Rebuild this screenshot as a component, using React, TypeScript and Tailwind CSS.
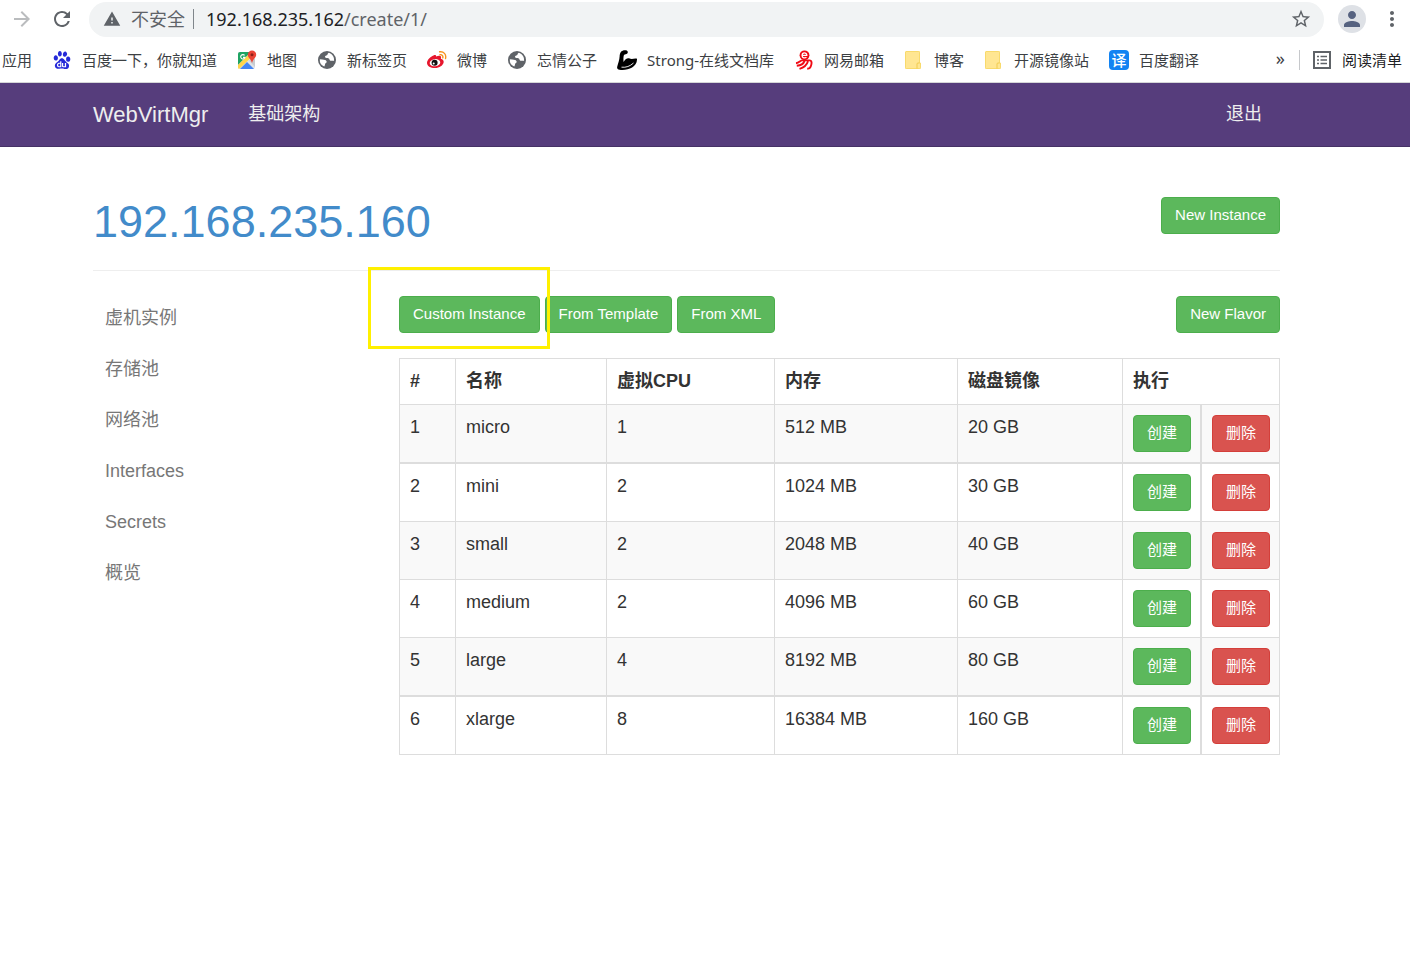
import React from "react";
import type { ReactNode } from "react";
import { SiBaidu } from "react-icons/si";
import {
  MdRefresh,
  MdArrowForward,
  MdStarBorder,
  MdWarning,
  MdPerson,
  MdMoreVert,
} from "react-icons/md";

function MapIcon() {
  return (
    <svg viewBox="0 0 20 20" className="size-5">
      <rect x="1" y="2" width="17" height="17" rx="2" fill="#dfe3e6" />
      <path d="M3 2h11L1 15V4a2 2 0 0 1 2-2z" fill="#1fa463" />
      <path d="M1 15 14 2l3 3L2 19a2 2 0 0 1-1-2z" fill="#ffd54a" />
      <path d="M3 19 10 12l7 7z" fill="#4285f4" />
      <path d="M12 10.500 18 17V9z" fill="#c9cdd1" />
      <path d="M7.600 5.400A2.200 2.200 0 1 0 8 7.400H6" fill="none" stroke="#fff" strokeWidth="1.100" />
      <path d="M15 0.500a4.200 4.200 0 0 0-4.200 4.200c0 3 3.400 4.300 4.200 8.300.8-4 4.200-5.300 4.200-8.300A4.200 4.200 0 0 0 15 .5z" fill="#ea4335" />
      <circle cx="15" cy="4.700" r="1.500" fill="#8e1f17" />
    </svg>
  );
}

function GlobeIcon() {
  return (
    <svg viewBox="0 0 20 20" className="size-5">
      <circle cx="10" cy="10" r="9" fill="#5f6368" />
      <path
        d="M12 2.800c-1 .3-1.300.9-1.500 1.700-.2.900-1 1-1.800 1.200-1 .3-.8 1.600-.1 2.100 1 .7 2.700.1 3.500 1 .6.700.3 1.700 1.300 1.900 1.300.3 2.600-.3 3.700.2A7.300 7.300 0 0 0 12 2.800z"
        fill="#fff"
      />
      <path
        d="M2.800 9.300c1.700.2 3.600.2 5.200.7 1.200.4 2 1.200 1.600 2.300-.3.800-1.300.9-1.500 1.800-.2.900-.2 1.900-.9 2.500A7.300 7.300 0 0 1 2.800 9.300z"
        fill="#fff"
      />
    </svg>
  );
}

function WeiboIcon() {
  return (
    <svg viewBox="0 0 20 20" className="size-5">
      <path
        d="M6.500 5.500c1.400-.7 2.600-.5 2.700.9 2-.8 4.600-1.200 4.900.6.1.7-.2 1.200-.3 1.700 2 .5 3 1.600 2.900 3.300-.3 3.400-4.400 6-8.700 6C3.500 18 0 15.900 0 12.900c0-2.900 3.600-6.200 6.500-7.400z"
        fill="#e6162d"
      />
      <ellipse cx="8" cy="12.700" rx="5.300" ry="3.600" transform="rotate(-8 8 12.700)" fill="#fff" />
      <circle cx="7.600" cy="12.800" r="3" fill="#111" />
      <circle cx="6.700" cy="13.500" r="1" fill="#fff" />
      <path d="M12.600 1.800c4-.7 7 2.600 5.900 6.700M13 4.700c2-.3 3.300 1.200 2.800 3.100" fill="none" stroke="#f7931e" strokeWidth="1.400" strokeLinecap="round" />
    </svg>
  );
}

function ArmIcon() {
  return (
    <svg viewBox="0 0 20 20" className="size-5">
      <path
        d="M4.500 1.300C5.800.2 8.300-.2 9.800.6c1.200.8 1.300 2 .5 2.800-.9.800-2.500.6-3.300 1.500-.6 1.400-.7 4.600-.4 7.100 1.300-2.700 3.100-4.100 5.400-3.800 1 .2 1.900.7 2.800.7 1.600 0 3-.6 5.200-.2.200 3.900-1.800 6.900-4.900 8.800-3.400 2.100-8.600 2.800-12.600 2.200C.5 19.500-.2 18.300.2 16.800 1 13.500 2.500 10 2.600 6.500c0-2 .7-4.100 1.900-5.200z"
        fill="#000"
      />
      <path d="M4.500 17.200c4.500.5 8.500-.9 12-4.200" fill="none" stroke="#fff" strokeWidth="0.900" />
    </svg>
  );
}

function NeteaseIcon() {
  return (
    <svg viewBox="0 0 20 20" className="size-5">
      <circle cx="10.500" cy="5.300" r="4.900" fill="#f00a14" />
      <path d="M8.200 5.400h4.600c0-3.400-4.700-3.300-4.700 0 0 2.800 3 3 4.300 1.700" fill="none" stroke="#fff" strokeWidth="1.300" />
      <path
        d="M2 13.300c3.200-.4 4-2.600 6-2.900h7.500c2.600 0 2.300 3.200 1.400 5.600-.8 2.300-2 2.900-3.700 2.500M10.500 11.200c-1 2.700-4 4.300-7.700 4.600M14 11.200c-1.200 4-4.500 6.500-8.500 7.600"
        fill="none"
        stroke="#f00a14"
        strokeWidth="1.900"
      />
    </svg>
  );
}

function FolderIcon() {
  return (
    <svg viewBox="0 0 20 20" className="size-5">
      <path d="M2 1h13a1 1 0 0 1 1 1v11h1v5a1 1 0 0 1-1 1H2a1 1 0 0 1-1-1V2a1 1 0 0 1 1-1z" fill="#ffe692" />
      <path d="M2 1.500h12.500a1 1 0 0 1 1 1V13h1v4.500a1 1 0 0 1-1 1H2.500a1 1 0 0 1-1-1V2" fill="none" stroke="#f8da6c" />
      <path d="M13 18.500V14a1 1 0 0 1 1-1h1.500" fill="none" stroke="#f0cb4e" />
    </svg>
  );
}

function TranslateIcon() {
  return (
    <span className="flex size-5 items-center justify-center rounded-sm bg-[#1283f2] text-[15px] leading-5 font-medium text-white">
      译
    </span>
  );
}

function ReadingListIcon() {
  return (
    <svg viewBox="0 0 20 20" className="size-5" fill="none" stroke="#5f6368">
      <rect x="2" y="2" width="16" height="16" strokeWidth="2" />
      <path d="M5 6.500h2M5 10h2M5 13.500h2M8.500 6.500H15M8.500 10H15M8.500 13.500H15" strokeWidth="1.500" />
    </svg>
  );
}

const bookmarks: { label: string; icon?: ReactNode }[] = [
  { label: "应用" },
  { label: "百度一下，你就知道", icon: <SiBaidu className="size-[18px] text-[#2529d8]" /> },
  { label: "地图", icon: <MapIcon /> },
  { label: "新标签页", icon: <GlobeIcon /> },
  { label: "微博", icon: <WeiboIcon /> },
  { label: "忘情公子", icon: <GlobeIcon /> },
  { label: "Strong-在线文档库", icon: <ArmIcon /> },
  { label: "网易邮箱", icon: <NeteaseIcon /> },
  { label: "博客", icon: <FolderIcon /> },
  { label: "开源镜像站", icon: <FolderIcon /> },
  { label: "百度翻译", icon: <TranslateIcon /> },
];

function BrowserChrome() {
  return (
    <div className="border-b border-[#d5d6d8] bg-white font-['Noto_Sans','Noto_Sans_CJK_SC',sans-serif]">
      <div className="flex h-10 items-center pr-1.5 pb-0.5 pl-2.5">
        <button type="button" aria-label="前进" className="mr-4 text-[#babcbe]">
          <MdArrowForward className="size-6" />
        </button>
        <button type="button" aria-label="重新加载" className="mr-[15px] text-[#5f6368]">
          <MdRefresh className="size-6" />
        </button>
        <div className="flex h-[35px] min-w-0 flex-1 items-center rounded-full bg-[#f1f3f4] pr-3 pl-3.5 text-lg leading-6">
          <MdWarning className="mr-2.5 size-[18px] text-[#5f6368]" />
          <span className="text-[#5f6368]">不安全</span>
          <span className="mr-3 ml-2 h-5 w-px bg-[#80868b]" />
          <div
            role="textbox"
            aria-label="地址"
            contentEditable
            suppressContentEditableWarning
            className="min-w-0 flex-1 truncate text-[#5f6368] outline-none"
          >
            <span className="text-[#202124]">192.168.235.162</span>/create/1/
          </div>
          <button type="button" aria-label="为此标签页添加书签" className="text-[#5f6368]">
            <MdStarBorder className="size-[22px]" />
          </button>
        </div>
        <button
          type="button"
          aria-label="用户"
          className="mr-3.5 ml-3.5 flex size-7 items-center justify-center rounded-full bg-[#dee1e6] text-[#566280]"
        >
          <MdPerson className="size-6" />
        </button>
        <button type="button" aria-label="菜单" className="text-[#5f6368]">
          <MdMoreVert className="size-6" />
        </button>
      </div>
      <div className="flex h-[42px] items-center pr-2 pb-0.5 pl-0.5 text-[15px] leading-5 text-[#3c4043]">
        <nav aria-label="书签" className="flex min-w-0 flex-1 gap-5 overflow-hidden whitespace-nowrap">
          {bookmarks.map(({ label, icon }) => (
            <a key={label} href="#" className="flex shrink-0 items-center gap-2.5">
              {icon && <span className="flex size-5 items-center justify-center">{icon}</span>}
              {label}
            </a>
          ))}
        </nav>
        <button type="button" aria-label="更多书签" className="mr-3.5 pb-1 text-lg leading-5 text-[#3c4043]">
          »
        </button>
        <span className="mr-3 h-5 w-px bg-[#c6c8cb]" />
        <button type="button" className="flex items-center gap-2.5 text-[#202124]">
          <ReadingListIcon />
          阅读清单
        </button>
      </div>
    </div>
  );
}

function Button({ children, danger = false }: { children: ReactNode; danger?: boolean }) {
  const tone = danger ? "border-[#d43f3a] bg-[#d9534f]" : "border-[#4cae4c] bg-[#5cb85c]";
  return (
    <button
      type="button"
      className={`block rounded-sm border px-[13px] pt-[7px] pb-2 text-[15px] leading-5 whitespace-nowrap text-white ${tone}`}
    >
      {children}
    </button>
  );
}

const links = ["虚机实例", "存储池", "网络池", "Interfaces", "Secrets", "概览"];

const flavors = [
  { id: 1, name: "micro", cpu: 1, memory: "512 MB", disk: "20 GB" },
  { id: 2, name: "mini", cpu: 2, memory: "1024 MB", disk: "30 GB" },
  { id: 3, name: "small", cpu: 2, memory: "2048 MB", disk: "40 GB" },
  { id: 4, name: "medium", cpu: 2, memory: "4096 MB", disk: "60 GB" },
  { id: 5, name: "large", cpu: 4, memory: "8192 MB", disk: "80 GB" },
  { id: 6, name: "xlarge", cpu: 8, memory: "16384 MB", disk: "160 GB" },
];

const headings = ["#", "名称", "虚拟CPU", "内存", "磁盘镜像"];
const headCell = "border-t border-l border-[#ddd] p-2.5 text-left font-bold";

function FlavorTable() {
  return (
    <table className="w-full table-fixed border-separate border-spacing-0 border-r border-b border-[#ddd]">
      <colgroup>
        <col className="w-[56px]" />
        <col className="w-[151px]" />
        <col className="w-[168px]" />
        <col className="w-[183px]" />
        <col className="w-[165px]" />
        <col className="w-[78px]" />
        <col className="w-[79px]" />
      </colgroup>
      <thead>
        <tr>
          {headings.map((h) => (
            <th key={h} className={headCell}>
              {h}
            </th>
          ))}
          <th colSpan={2} className={headCell}>
            执行
          </th>
        </tr>
      </thead>
      <tbody>
        {flavors.map((f) => {
          const top = f.id === 2 || f.id === 6 ? "border-t-2" : "border-t";
          const cell = `${top} border-l border-[#ddd] p-2.5 align-top`;
          return (
            <tr key={f.id} className="odd:bg-[#f9f9f9]">
              <td className={cell}>{f.id}</td>
              <td className={cell}>{f.name}</td>
              <td className={cell}>{f.cpu}</td>
              <td className={cell}>{f.memory}</td>
              <td className={cell}>{f.disk}</td>
              <td className={cell}>
                <Button>创建</Button>
              </td>
              <td className={`${top} border-l-2 border-[#ddd] py-2.5 pl-2.5 align-top`}>
                <Button danger>删除</Button>
              </td>
            </tr>
          );
        })}
      </tbody>
    </table>
  );
}

export default function App() {
  return (
    <div className="min-h-screen bg-white font-['Liberation_Sans','Noto_Sans_CJK_SC',sans-serif] text-lg leading-[25px] text-[#333]">
      <BrowserChrome />
      <header className="border-b border-[#463265] bg-[#563d7c] pr-[148px] pl-[93px] text-[#eee]">
        <nav className="flex h-[63px] items-center">
          <a href="#" className="mr-10 text-[22px]">
            WebVirtMgr
          </a>
          <a href="#">基础架构</a>
          <a href="#" className="ml-auto">
            退出
          </a>
        </nav>
      </header>
      <main className="pr-[130px] pl-[93px]">
        <div className="flex items-start justify-between border-b border-[#eee] pt-[50px] pb-6">
          <h1 className="text-[45px] leading-[49px] text-[#428bca]">192.168.235.160</h1>
          <Button>New Instance</Button>
        </div>
        <div className="flex pt-[25px]">
          <nav className="w-[306px] shrink-0 pl-3">
            <ul className="flex flex-col gap-[26px] pt-2.5">
              {links.map((l) => (
                <li key={l}>
                  <a href="#" className="text-[#777]">
                    {l}
                  </a>
                </li>
              ))}
            </ul>
          </nav>
          <section className="min-w-0 flex-1">
            <div className="mb-[25px] flex gap-[5px]">
              <div className="relative">
                <Button>Custom Instance</Button>
                <div className="pointer-events-none absolute -top-[29px] -right-2.5 -bottom-4 -left-[31px] z-10 border-3 border-[#fff000]" />
              </div>
              <Button>From Template</Button>
              <Button>From XML</Button>
              <div className="ml-auto">
                <Button>New Flavor</Button>
              </div>
            </div>
            <FlavorTable />
          </section>
        </div>
      </main>
    </div>
  );
}
